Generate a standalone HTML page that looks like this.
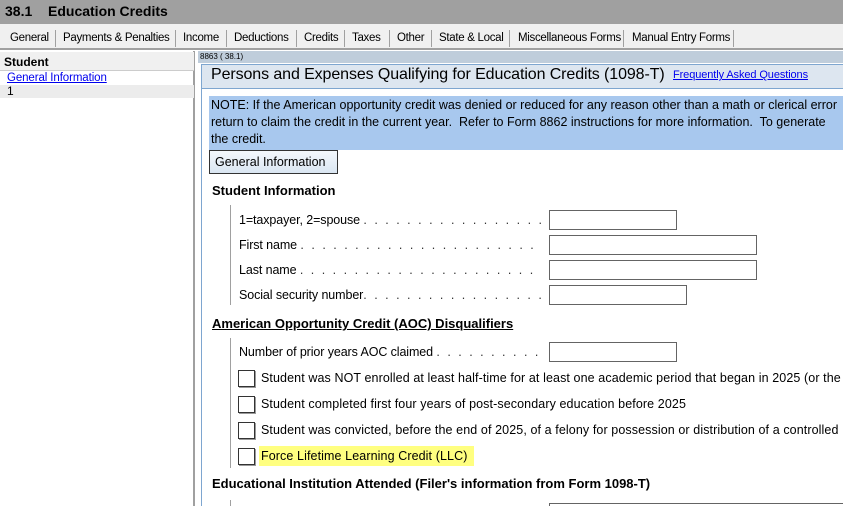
<!DOCTYPE html>
<html><head><style>
*{margin:0;padding:0;box-sizing:border-box}
html,body{width:843px;height:506px;overflow:hidden}
body{background:#fff;font-family:"Liberation Sans",sans-serif;font-size:13px;color:#000;position:relative}
.a{position:absolute;white-space:nowrap}
.tab{position:absolute;top:27px;height:22px;line-height:22px;font-size:11.5px;white-space:nowrap;letter-spacing:-0.3px}
.sep{position:absolute;top:30px;width:1px;height:17px;background:#a0a0a0}
.lbl{position:absolute;left:239px;font-size:12.5px;white-space:nowrap;overflow:hidden;width:302px;letter-spacing:-0.1px}
.dots{letter-spacing:2px;color:#333}
.in{position:absolute;height:20px;border:1px solid #646464;background:#fff}
.cb{position:absolute;left:238px;width:17px;height:17px;border:1px solid #333;background:#fff;box-shadow:1px 1px 0 #999}
.t{position:absolute;font-size:12.5px;white-space:nowrap;letter-spacing:0.1px}
</style></head><body>
<div class="a" style="left:0;top:0;width:843px;height:24px;background:#a0a0a0"></div>
<div class="a" style="left:5px;top:3px;font-weight:bold;font-size:14px">38.1</div>
<div class="a" style="left:48px;top:3px;font-weight:bold;font-size:14px">Education Credits</div>
<div class="a" style="left:0;top:24px;width:843px;height:26px;background:#f0f0f0;border-bottom:2px solid #a0a0a0"></div>
<div class="tab" style="left:10px">General</div><div class="sep" style="left:55px"></div>
<div class="tab" style="left:63px">Payments &amp; Penalties</div><div class="sep" style="left:175px"></div>
<div class="tab" style="left:183px">Income</div><div class="sep" style="left:226px"></div>
<div class="tab" style="left:234px">Deductions</div><div class="sep" style="left:296px"></div>
<div class="tab" style="left:304px">Credits</div><div class="sep" style="left:344px"></div>
<div class="tab" style="left:352px">Taxes</div><div class="sep" style="left:389px"></div>
<div class="tab" style="left:397px">Other</div><div class="sep" style="left:431px"></div>
<div class="tab" style="left:439px">State &amp; Local</div><div class="sep" style="left:509px"></div>
<div class="tab" style="left:518px">Miscellaneous Forms</div><div class="sep" style="left:623px"></div>
<div class="tab" style="left:632px">Manual Entry Forms</div><div class="sep" style="left:733px"></div>
<div class="a" style="left:0;top:51px;width:195px;height:455px;background:#fff;border-right:2px solid #a0a0a0"></div>
<div class="a" style="left:0;top:52px;width:194px;height:19px;background:#f0f0f0;border-bottom:1px solid #ccc;font-weight:bold;font-size:12px;padding:3px 0 0 4px">Student</div>
<div class="a" style="left:7px;top:72px;font-size:11.5px;letter-spacing:-0.1px;color:#0000ee;text-decoration:underline">General Information</div>
<div class="a" style="left:0;top:85px;width:194px;height:13px;background:#ececec;font-size:12px;line-height:12px;padding-left:7px">1</div>
<div class="a" style="left:197px;top:51px;width:646px;height:455px;background:#fff"></div>
<div class="a" style="left:198px;top:51px;width:645px;height:12px;background:#bfcddb;font-size:8px;line-height:12px;padding-left:2px">8863 ( 38.1)</div>
<div class="a" style="left:201px;top:64px;width:650px;height:450px;border:1px solid #7ea6d0;background:#fff"></div>
<div class="a" style="left:202px;top:65px;width:641px;height:24px;background:#dde6f0;border-bottom:1px solid #7ea6d0"></div>
<div class="a" style="left:211px;top:66px;font-size:16px;letter-spacing:-0.1px">Persons and Expenses Qualifying for Education Credits (1098-T)</div>
<div class="a" style="left:673px;top:69px;font-size:11px;letter-spacing:-0.1px;color:#0000ee;text-decoration:underline">Frequently Asked Questions</div>
<div class="a" style="left:209px;top:96px;width:634px;height:54px;background:#a8c8ee"></div>
<div class="a" style="left:211px;top:97px;font-size:12.5px;line-height:17px;letter-spacing:0px">NOTE: If the American opportunity credit was denied or reduced for any reason other than a math or clerical error<br>return to claim the credit in the current year.&nbsp; Refer to Form 8862 instructions for more information.&nbsp; To generate<br>the credit.</div>
<div class="a" style="left:209px;top:150px;width:129px;height:24px;border:1px solid #333;background:linear-gradient(#f4f8fc,#dae6f2);font-size:12.5px;padding:4px 0 0 5px">General Information</div>
<div class="a" style="left:212px;top:183px;font-weight:bold;font-size:13px">Student Information</div>
<div class="a" style="left:230px;top:205px;width:1px;height:100px;background:#a0a0a0"></div>
<div class="lbl" style="top:213px">1=taxpayer, 2=spouse <span class="dots">. . . . . . . . . . . . . . . . . . . . . . . .</span></div>
<div class="in" style="left:549px;top:210px;width:128px"></div>
<div class="lbl" style="top:238px">First name <span class="dots">. . . . . . . . . . . . . . . . . . . . . . . . . . . . . .</span></div>
<div class="in" style="left:549px;top:235px;width:208px"></div>
<div class="lbl" style="top:263px">Last name <span class="dots">. . . . . . . . . . . . . . . . . . . . . . . . . . . . . .</span></div>
<div class="in" style="left:549px;top:260px;width:208px"></div>
<div class="lbl" style="top:288px">Social security number<span class="dots">. . . . . . . . . . . . . . . . . . . . .</span></div>
<div class="in" style="left:549px;top:285px;width:138px"></div>
<div class="a" style="left:212px;top:316px;font-weight:bold;font-size:13px;text-decoration:underline">American Opportunity Credit (AOC) Disqualifiers</div>
<div class="a" style="left:230px;top:338px;width:1px;height:130px;background:#a0a0a0"></div>
<div class="lbl" style="top:345px">Number of prior years AOC claimed <span class="dots">. . . . . . . . . . . . .</span></div>
<div class="in" style="left:549px;top:342px;width:128px"></div>
<div class="cb" style="top:370px"></div>
<div class="t" style="left:261px;top:371px">Student was NOT enrolled at least half-time for at least one academic period that began in 2025 (or the</div>
<div class="cb" style="top:396px"></div>
<div class="t" style="left:261px;top:397px">Student completed first four years of post-secondary education before 2025</div>
<div class="cb" style="top:422px"></div>
<div class="t" style="left:261px;top:423px">Student was convicted, before the end of 2025, of a felony for possession or distribution of a controlled</div>
<div class="cb" style="top:448px"></div>
<div class="a" style="left:259px;top:446px;width:215px;height:20px;background:#ffff80"></div>
<div class="t" style="left:261px;top:449px">Force Lifetime Learning Credit (LLC)</div>
<div class="a" style="left:212px;top:476px;font-weight:bold;font-size:13px">Educational Institution Attended (Filer's information from Form 1098-T)</div>
<div class="a" style="left:230px;top:500px;width:1px;height:6px;background:#a0a0a0"></div>
<div class="in" style="left:549px;top:503px;width:300px"></div>
</body></html>
